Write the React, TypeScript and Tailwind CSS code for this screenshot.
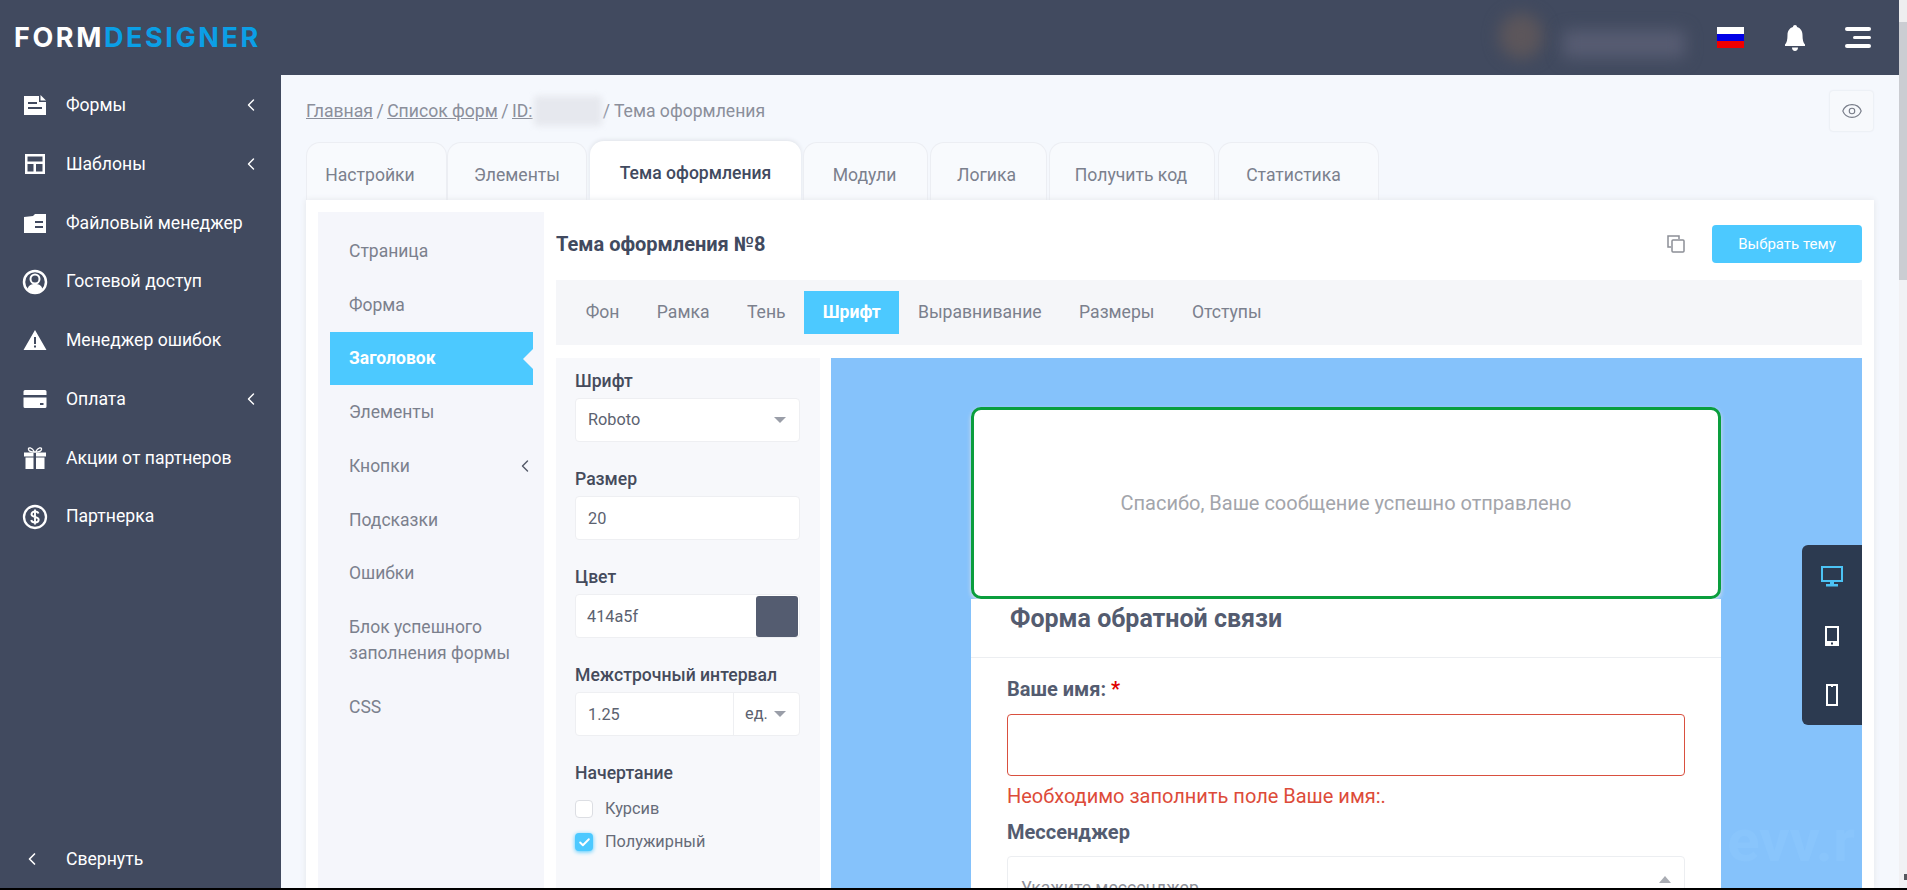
import React from 'react';
import { ChevronLeft, Eye, Check } from 'lucide-react';

const IconForms = () => (
  <svg width="24" height="22" viewBox="0 0 24 22"><path d="M1 2h15v6h7v13H1z" fill="#fff" /><path d="M17.500 1 23 6.500h-5.500z" fill="#fff" /><path d="M5 8h9v2H5zM5 13h14v2H5z" fill="#414a5f" /></svg>
);
const IconTemplates = () => (
  <svg width="24" height="22" viewBox="0 0 24 22"><path fillRule="evenodd" d="M2 1h20v20H2zM4.500 3.500v5h15v-5zM4.500 11v7.500h6V11zM13 11v7.500h6.500V11z" fill="#fff" /></svg>
);
const IconFiles = () => (
  <svg width="24" height="22" viewBox="0 0 24 22"><path d="M1 5l9-1 2-2h11v19H1z" fill="#fff" /><path d="M12 9h8v2h-8zM12 14h8v2h-8z" fill="#414a5f" /></svg>
);
const IconUser = () => (
  <svg width="26" height="26" viewBox="0 0 26 26"><circle cx="13" cy="13" r="11" fill="none" stroke="#fff" strokeWidth="2.500" /><circle cx="13" cy="10" r="4.500" fill="none" stroke="#fff" strokeWidth="2" /><path d="M5.500 20c1-4 4-5 7.500-5s6.500 1 7.500 5c-2 2.500-4.500 3.500-7.500 3.500S7.500 22.500 5.500 20z" fill="#fff" /></svg>
);
const IconWarn = () => (
  <svg width="24" height="22" viewBox="0 0 24 22"><path fillRule="evenodd" d="M12 1 23.500 21H.5zM11 8v7h2V8zM11 16.500v2h2v-2z" fill="#fff" /></svg>
);
const IconCard = () => (
  <svg width="24" height="20" viewBox="0 0 24 20"><path fillRule="evenodd" d="M2 1h20a1.500 1.500 0 0 1 1.500 1.500v15A1.500 1.500 0 0 1 22 19H2a1.500 1.500 0 0 1-1.500-1.500v-15A1.500 1.500 0 0 1 2 1zM.5 6v2.500h23V6zM17 14v2h3.500v-2z" fill="#fff" /></svg>
);
const IconGift = () => (
  <svg width="24" height="24" viewBox="0 0 24 24"><path d="M1 6.500h9.500v4H1zM13 6.500h10v4H13zM2.500 11.500h8V23h-8zM13 11.500h8.500V23H13z" fill="#fff" /><path d="M11.500 6C9 1 5 1 5.500 3.500 6 5.500 9 6 11.500 6zM12.500 6c2.500-5 6.500-5 6-2.500C18 5.500 15 6 12.500 6z" fill="none" stroke="#fff" strokeWidth="1.300" /></svg>
);
const IconDollar = () => (
  <svg width="26" height="26" viewBox="0 0 26 26"><circle cx="13" cy="13" r="11" fill="none" stroke="#fff" strokeWidth="2.300" /><path d="M16.500 9.500C16 8 14.800 7.500 13 7.500c-2 0-3.500 1-3.500 2.700 0 3.800 7.200 1.800 7.200 5.600 0 1.700-1.700 2.700-3.700 2.700-2 0-3.400-.8-3.800-2.500M13 5.500v15" fill="none" stroke="#fff" strokeWidth="1.900" /></svg>
);

const sideItems: [React.ReactNode, string, boolean][] = [
  [<IconForms />, 'Формы', true],
  [<IconTemplates />, 'Шаблоны', true],
  [<IconFiles />, 'Файловый менеджер', false],
  [<IconUser />, 'Гостевой доступ', false],
  [<IconWarn />, 'Менеджер ошибок', false],
  [<IconCard />, 'Оплата', true],
  [<IconGift />, 'Акции от партнеров', false],
  [<IconDollar />, 'Партнерка', false],
];

const Field = ({ label, children }: { label: string; children: React.ReactNode }) => (
  <div className="flex flex-col pb-[27px]">
    <div className="h-[20px] text-[17.600px] leading-[20px] font-medium text-[#454b5c]">{label}</div>
    <div className="mt-[7px] flex h-[44px] items-center rounded-[4px] border border-[#eeeff2] bg-white text-[16.300px] text-[#5c6270]">
      {children}
    </div>
  </div>
);

const Caret = () => <span className="block h-0 w-0 border-x-[6px] border-t-[6px] border-x-transparent border-t-[#9a9ea8]" />;

export default function App() {
  return (
    <div className="relative flex h-[890px] w-[1907px] flex-col overflow-hidden bg-white [font-family:Roboto,sans-serif]">
      <div className="flex h-[888px] min-h-0">
        <div className="flex min-w-0 flex-1 flex-col">
          <header className="flex h-[75px] shrink-0 items-center bg-[#414a5f]">
            <div className="w-[281px] pl-[14px] [font-family:Inter,sans-serif] text-[27px] leading-none font-bold tracking-[2.600px]">
              <span className="text-white">FORM</span>
              <span className="text-[#0b9fe6]">DESIGNER</span>
            </div>
            <div className="flex flex-1 items-center justify-end">
              <div className="mr-[20px] h-[46px] w-[44px] -translate-y-[2px] rounded-full bg-[#5c565b] blur-[8px]" />
              <div className="mr-[32px] h-[28px] w-[122px] translate-y-[6px] rounded bg-[#575c72] blur-[8px]" />
              <div className="flex h-[21px] w-[27px] flex-col">
                <div className="flex-1 bg-white" />
                <div className="flex-1 bg-[#0000e6]" />
                <div className="flex-1 bg-[#f00000]" />
              </div>
              <svg className="ml-[41px]" width="20" height="26" viewBox="0 0 20 26"><path d="M10 0c1.200 0 2 .8 2 2 3.500 1 5.500 4 5.500 8 0 5 .8 7.500 2.500 9.500V21H0v-1.500C1.700 17.500 2.500 15 2.500 10c0-4 2-7 5.500-8 0-1.200.8-2 2-2zM7 22.500h6c0 2-1.200 3.500-3 3.500s-3-1.500-3-3.500z" fill="#fff" /></svg>
              <div className="mr-[28px] ml-[40px] flex w-[26px] flex-col items-end gap-[4.500px]">
                <div className="h-[4px] w-full rounded-full bg-white" />
                <div className="h-[3.500px] w-[18px] rounded-full bg-white" />
                <div className="h-[4px] w-full rounded-full bg-white" />
              </div>
            </div>
          </header>

          <div className="flex min-h-0 flex-1">
            <aside className="flex w-[281px] shrink-0 flex-col justify-between bg-[#414a5f] pt-px text-[17.600px] text-white">
              <nav>
                {sideItems.map(([icon, name, chev]) => (
                  <div key={name} className="flex h-[58.750px] items-center">
                    <span className="flex w-[66px] justify-center pl-[4px]">{icon}</span>
                    <span className="flex-1">{name}</span>
                    {chev && <ChevronLeft size={20} strokeWidth={1.700} className="mr-[20px]" />}
                  </div>
                ))}
              </nav>
              <div className="flex h-[58px] items-center">
                <span className="flex w-[66px] justify-center pr-[2px]">
                  <ChevronLeft size={20} strokeWidth={2} />
                </span>
                <span>Свернуть</span>
              </div>
            </aside>

            <main className="flex min-w-0 flex-1 flex-col bg-[#f5f8fd] px-[25px] pt-[16px]">
              <div className="mb-[10px] flex h-[40px] shrink-0 items-center justify-between">
                <div className="flex items-center text-[17.600px] text-[#8b8f9b]">
                  <span className="underline">Главная</span>
                  <span className="mx-[3.500px]">/</span>
                  <span className="underline">Список форм</span>
                  <span className="mx-[3.500px]">/</span>
                  <span className="underline">ID:</span>
                  <span className="mx-[1px] h-[30px] w-[68px] rounded bg-[#e6e8ee] blur-[3px]" />
                  <span>/ Тема оформления</span>
                </div>
                <div className="mr-px flex h-[40px] w-[43px] items-center justify-center rounded-[3px] bg-[#f7f9fc] shadow-[0_0_2px_#d8dbe2]">
                  <Eye size={22} strokeWidth={1.200} className="text-[#777c88]" />
                </div>
              </div>

              <div className="flex h-[59px] shrink-0 items-end text-[17.600px] text-[#7b808d]">
                <div className="flex h-[58px] w-[141px] items-center justify-center rounded-t-[14px] border-x border-t border-[#eceef3] bg-[#f8fafd] pt-[7px] pr-[13px]">Настройки</div>
                <div className="mr-[3px] flex h-[58px] w-[140px] items-center justify-center rounded-t-[14px] border-x border-t border-[#eceef3] bg-[#f8fafd] pt-[7px]">Элементы</div>
                <div className="mr-[2px] flex h-[59px] w-[211px] items-center justify-center rounded-t-[14px] bg-white pt-[5px] font-medium text-[#414a5f] shadow-[0_-1px_4px_#dfe2e8]">Тема оформления</div>
                {[
                  ['Модули', 'mr-[2px] w-[125px] pr-[2px]'],
                  ['Логика', 'mr-[2px] w-[117px] pr-[4px]'],
                  ['Получить код', 'mr-[3px] w-[166px] pr-[2px]'],
                  ['Статистика', 'w-[161px] pr-[10px]'],
                ].map(([t, c]) => (
                  <div key={t} className={`flex h-[58px] items-center justify-center rounded-t-[14px] border-x border-t border-[#eceef3] bg-[#f8fafd] pt-[7px] ${c}`}>{t}</div>
                ))}
              </div>

              <section className="flex min-h-0 flex-1 bg-white pt-[12px] pr-[12px] pl-[12px] shadow-[0_0_6px_#e3e5ea]">
                <div className="w-[226px] shrink-0 bg-[#f5f6fb] pt-[12px] pr-[11px] pl-[12px] text-[17.500px] text-[#7b808d]">
                  {['Страница', 'Форма'].map((t) => (
                    <div key={t} className="flex h-[53.750px] items-center pl-[19px]">{t}</div>
                  ))}
                  <div className="relative flex h-[53.750px] items-center bg-[#4cc9ff] pl-[19px] font-bold text-white">
                    Заголовок
                    <span className="absolute top-[17px] right-0 h-0 w-0 border-y-[10px] border-r-[10px] border-y-transparent border-r-[#f5f6fb]" />
                  </div>
                  <div className="flex h-[53.750px] items-center pl-[19px]">Элементы</div>
                  <div className="flex h-[53.750px] items-center justify-between pl-[19px]">
                    Кнопки
                    <ChevronLeft size={20} strokeWidth={1.700} className="-mr-[2px] text-[#555b69]" />
                  </div>
                  {['Подсказки', 'Ошибки'].map((t) => (
                    <div key={t} className="flex h-[53.750px] items-center pl-[19px]">{t}</div>
                  ))}
                  <div className="flex h-[80px] items-center pl-[19px] leading-[26px]">Блок успешного<br />заполнения формы</div>
                  <div className="flex h-[53.750px] items-center pl-[19px]">CSS</div>
                </div>

                <div className="ml-[12px] flex min-w-0 flex-1 flex-col">
                  <div className="flex h-[68px] shrink-0 items-center justify-between pb-[5px]">
                    <h2 className="text-[20px] font-bold text-[#414a5f]">Тема оформления №8</h2>
                    <div className="flex items-center pt-px">
                      <svg width="18" height="18" viewBox="0 0 18 18" fill="none" stroke="#8c8f96" strokeWidth="1.500"><path d="M12 4V1H1v11h3" /><rect x="5" y="5" width="12" height="12" rx="1" /></svg>
                      <div className="ml-[27px] flex h-[38px] w-[150px] items-center justify-center rounded-[4px] bg-[#4cc9ff] text-[15px] text-white">Выбрать тему</div>
                    </div>
                  </div>

                  <div className="flex h-[65px] shrink-0 items-center bg-[#f5f6f9] pl-[11px] text-[17.600px] text-[#7b808d]">
                    {['Фон', 'Рамка', 'Тень'].map((t) => (
                      <div key={t} className="px-[18.700px]">{t}</div>
                    ))}
                    <div className="flex h-[43px] w-[95px] items-center justify-center bg-[#4cc9ff] font-bold text-white">Шрифт</div>
                    {['Выравнивание', 'Размеры', 'Отступы'].map((t) => (
                      <div key={t} className="px-[18.700px]">{t}</div>
                    ))}
                  </div>

                  <div className="mt-[13px] flex min-h-0 flex-1">
                    <div className="w-[264px] shrink-0 bg-[#f7f8fb] pt-[13px] pr-[20px] pl-[19px]">
                      <Field label="Шрифт">
                        <span className="flex-1 pl-[12px]">Roboto</span>
                        <span className="mr-[13px]"><Caret /></span>
                      </Field>
                      <Field label="Размер"><span className="pt-[3px] pl-[12px]">20</span></Field>
                      <Field label="Цвет">
                        <span className="flex-1 pt-[3px] pl-[11px]">414a5f</span>
                        <span className="mr-px h-[41px] w-[42px] rounded-[3px] bg-[#545c70]" />
                      </Field>
                      <Field label="Межстрочный интервал">
                        <span className="flex-1 pt-[3px] pl-[12px]">1.25</span>
                        <span className="flex h-full w-[66px] items-center gap-[6px] border-l border-[#eeeff2] pl-[11px]">ед. <Caret /></span>
                      </Field>
                      <div className="h-[20px] text-[17.600px] leading-[20px] font-medium text-[#454b5c]">Начертание</div>
                      <div className="mt-[16px] flex h-[20px] items-center text-[16.300px] text-[#666b78]">
                        <span className="mr-[12px] h-[18px] w-[18px] rounded-[4px] border border-[#dcdee3] bg-white" />
                        Курсив
                      </div>
                      <div className="mt-[13px] flex h-[20px] items-center text-[16.300px] text-[#666b78]">
                        <span className="mr-[12px] flex h-[18px] w-[18px] items-center justify-center rounded-[4px] bg-[#4cc9ff] shadow-[0_1px_4px_#4cc9ff]">
                          <Check size={13} strokeWidth={3.500} className="text-white" />
                        </span>
                        Полужирный
                      </div>
                    </div>

                    <div className="relative ml-[11px] min-w-0 flex-1 overflow-hidden bg-[#85c2fb] pt-[49px] pl-[140px]">
                      <div className="w-[750px] text-[#545c70]">
                        <div className="flex h-[192px] items-center justify-center rounded-[10px] border-[3px] border-[#0a9e3d] bg-white text-[20px] text-[#a3a5ab] shadow-[0_2px_4px_#dde0e6]">
                          Спасибо, Ваше сообщение успешно отправлено
                        </div>
                        <div className="bg-white pb-[20px]">
                          <div className="h-[59px] border-b border-[#eceef1] pt-[6px] pl-[39px] text-[25px] leading-[28px] font-bold">Форма обратной связи</div>
                          <div className="px-[36px] text-[20px] leading-[24px]">
                            <div className="pt-[19px] font-bold">Ваше имя: <span className="text-[#e00000]">*</span></div>
                            <div className="mt-[13px] h-[62px] rounded-[4px] border border-[#d9503f]" />
                            <div className="mt-[8px] text-[#dd4b39]">Необходимо заполнить поле Ваше имя:.</div>
                            <div className="mt-[12px] font-bold">Мессенджер</div>
                            <div className="relative mt-[12px] h-[62px] rounded-[4px] border border-[#eceef1] pt-[19px] pl-[13px] text-[17.600px] text-[#8d9099]">
                              Укажите мессенджер
                              <span className="absolute top-[19px] right-[13px] h-0 w-0 border-x-[6px] border-b-[7px] border-x-transparent border-b-[#a9acb3]" />
                            </div>
                          </div>
                        </div>
                      </div>

                      <div className="absolute top-[453px] right-[7px] text-[60px] leading-[60px] font-bold text-[#89c5fc] select-none">evv.r</div>

                      <div className="absolute top-[187px] right-0 flex h-[180px] w-[60px] flex-col items-center justify-around rounded-l-[6px] bg-[#2c3a50] pt-[2px]">
                        <svg width="22" height="22" viewBox="0 0 22 22"><path fillRule="evenodd" d="M0 0h22v16H0zM2 2v12h18V2zM9 16h4v2h4v2.500H5V18h4z" fill="#4cc3f5" /></svg>
                        <svg width="16" height="20" viewBox="0 0 16 20"><path fillRule="evenodd" d="M1 0h14v20H1zM3 2v13h10V2zM7 16.500v2h2v-2z" fill="#fff" /></svg>
                        <svg width="12" height="22" viewBox="0 0 12 22"><path fillRule="evenodd" d="M0 0h12v22H0zM2 2v18h8V2z" fill="#fff" /><rect x="5" y="1" width="2" height="2" fill="#fff" /></svg>
                      </div>
                    </div>
                  </div>
                </div>
              </section>
            </main>
          </div>
        </div>

        <div className="relative flex w-[8px] shrink-0 flex-col bg-[#f1f1f4]">
          <div className="h-[22px] bg-[#eeeeef]" />
          <div className="h-[258px] bg-[#cbcdd2]" />
          <span className="absolute right-0 bottom-[8px] h-[6px] w-[3px] bg-[#55585f]" />
        </div>
      </div>
      <div className="h-[2px] shrink-0 bg-black" />
    </div>
  );
}
